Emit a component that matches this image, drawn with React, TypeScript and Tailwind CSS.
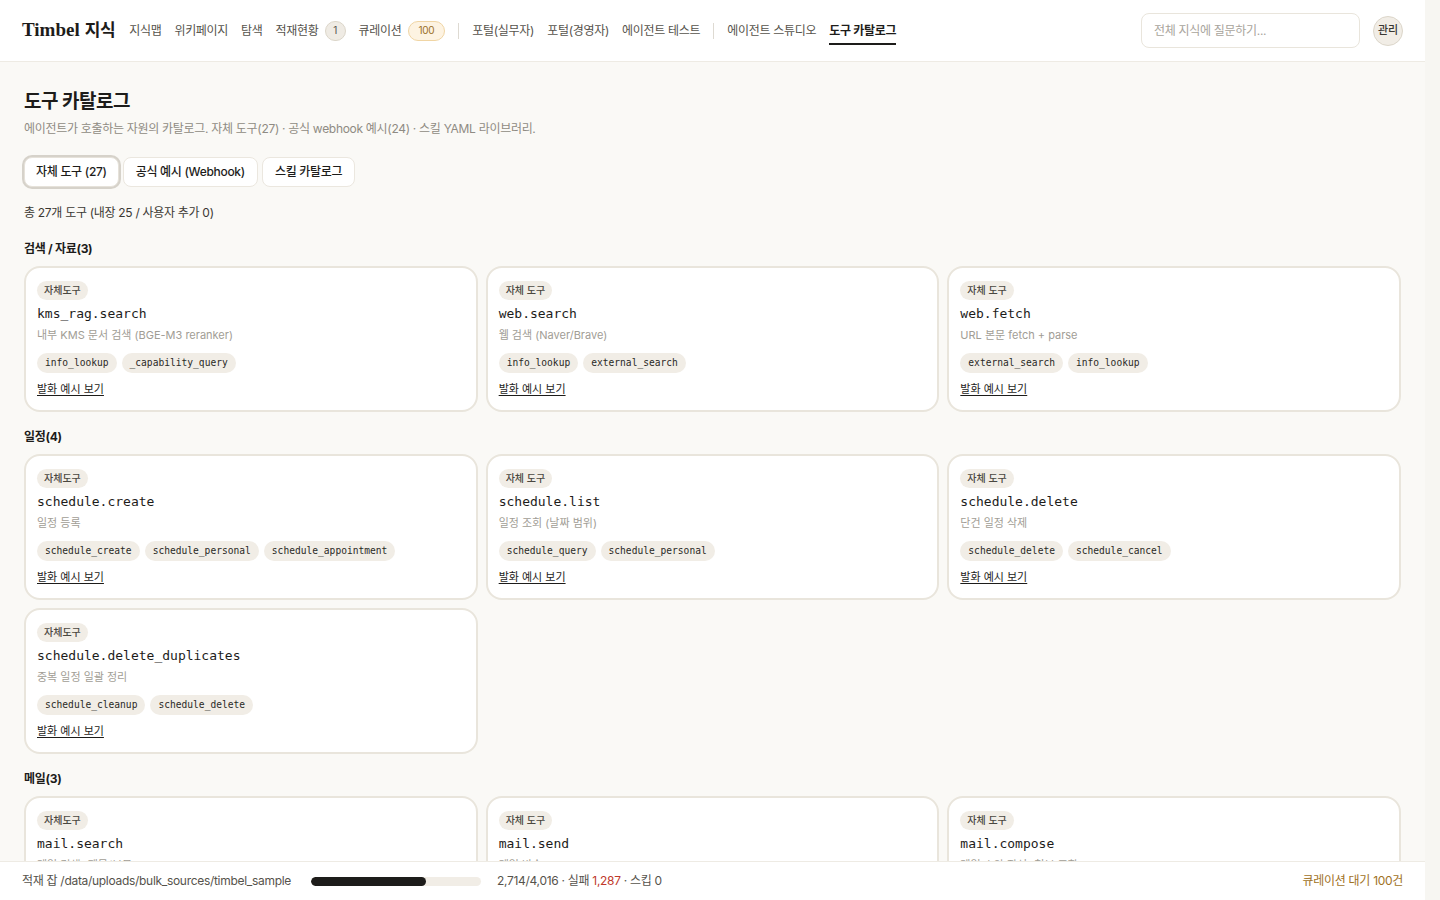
import React from 'react'

type Tool = {
  name: string
  desc: string
  tags: string[]
}

type Section = {
  title: string
  tools: Tool[]
}

const sections: Section[] = [
  {
    title: '검색 / 자료(3)',
    tools: [
      { name: 'kms_rag.search', desc: '내부 KMS 문서 검색 (BGE-M3 reranker)', tags: ['info_lookup', '_capability_query'] },
      { name: 'web.search', desc: '웹 검색 (Naver/Brave)', tags: ['info_lookup', 'external_search'] },
      { name: 'web.fetch', desc: 'URL 본문 fetch + parse', tags: ['external_search', 'info_lookup'] },
    ],
  },
  {
    title: '일정(4)',
    tools: [
      { name: 'schedule.create', desc: '일정 등록', tags: ['schedule_create', 'schedule_personal', 'schedule_appointment'] },
      { name: 'schedule.list', desc: '일정 조회 (날짜 범위)', tags: ['schedule_query', 'schedule_personal'] },
      { name: 'schedule.delete', desc: '단건 일정 삭제', tags: ['schedule_delete', 'schedule_cancel'] },
      { name: 'schedule.delete_duplicates', desc: '중복 일정 일괄 정리', tags: ['schedule_cleanup', 'schedule_delete'] },
    ],
  },
  {
    title: '메일(3)',
    tools: [
      { name: 'mail.search', desc: '메일 검색 (제목/본문)', tags: ['mail_query', 'info_lookup'] },
      { name: 'mail.send', desc: '메일 발송', tags: ['mail_send'] },
      { name: 'mail.compose', desc: '메일 초안 작성 (첨부 포함)', tags: ['mail_compose', 'mail_send'] },
    ],
  },
  {
    title: '문서(3)',
    tools: [
      { name: 'doc.summarize', desc: '문서 요약', tags: ['doc_summary'] },
      { name: 'doc.translate', desc: '문서 번역', tags: ['doc_translate'] },
      { name: 'doc.compare', desc: '문서 비교', tags: ['doc_compare'] },
    ],
  },
]

const navItems = ['지식맵', '위키페이지', '탐색']

const sans = "font-['Inter','Noto_Sans_CJK_KR',sans-serif]"
const mono = "font-['DejaVu_Sans_Mono',monospace]"

function ToolCard({ tool, col }: { tool: Tool; col: number }) {
  return (
    <div className="rounded-2xl border-2 border-[#e9e5dc] bg-white px-[11px] pt-[13px] pb-[12px]">
      <div className="flex">
        <span className="inline-flex h-[19px] items-center rounded-full bg-[#f1ede6] px-[7px] text-[10px] font-medium text-[#4a4740]">
          {col === 0 ? '자체도구' : '자체 도구'}
        </span>
      </div>
      <div className={`${mono} mt-[3px] text-[13px] leading-[22px] text-[#1d1c1a]`}>{tool.name}</div>
      <div className="text-[11px] leading-[20px] text-[#a19d95]">{tool.desc}</div>
      <div className="mt-[8px] flex flex-wrap gap-[5px]">
        {tool.tags.map((t) => (
          <span
            key={t}
            className={`${mono} inline-flex h-[20px] items-center rounded-full bg-[#f1ede6] px-[8px] text-[9.6px] text-[#2a2925]`}
          >
            {t}
          </span>
        ))}
      </div>
      <a className="mt-[7px] block w-fit text-[11px] leading-[18px] text-[#1d1c1a] underline underline-offset-2">
        발화 예시 보기
      </a>
    </div>
  )
}

export default function App() {
  return (
    <div className={`${sans} flex h-screen overflow-hidden bg-[#faf9f6] text-[#1d1c1a]`}>
      <div className="flex min-w-0 flex-1 flex-col">
        {/* top navigation */}
        <header className="flex h-[62px] shrink-0 items-center border-b border-[#eeebe4] bg-white px-[22px]">
          <div className="flex items-center font-bold">
            <span className="font-['Liberation_Serif',serif] text-[19px]">Timbel</span>
            <span className="ml-[5px] text-[17px] tracking-tight">지식</span>
          </div>
          <nav className="ml-[14px] flex items-center gap-[13px] text-[12px] tracking-tight text-[#56534c]">
            {navItems.map((n) => (
              <span key={n}>{n}</span>
            ))}
            <span className="flex items-center gap-[6px]">
              적재현황
              <span className="inline-flex h-[20px] w-[21px] items-center justify-center rounded-full border border-[#dcd6ca] bg-[#efebe4] text-[10px] text-[#56534c]">
                1
              </span>
            </span>
            <span className="flex items-center gap-[6px]">
              큐레이션
              <span className="inline-flex h-[20px] items-center justify-center rounded-full border border-[#f0d5a4] bg-[#fdf3e2] px-[10px] text-[10px] text-[#9a6f28]">
                100
              </span>
            </span>
            <span className="h-[16px] w-px bg-[#dedad2]" />
            <span>포털(실무자)</span>
            <span>포털(경영자)</span>
            <span>에이전트 테스트</span>
            <span className="h-[16px] w-px bg-[#dedad2]" />
            <span>에이전트 스튜디오</span>
            <span className="relative font-bold text-[#1d1c1a]">
              도구 카탈로그
              <span className="absolute left-0 right-0 top-[21px] h-[2px] bg-[#1d1c1a]" />
            </span>
          </nav>
          <div className="ml-auto flex items-center gap-[13px]">
            <input
              placeholder="전체 지식에 질문하기..."
              className="h-[35px] w-[219px] rounded-lg border border-[#e9e5dc] bg-white px-[12px] text-[12px] tracking-tight outline-none placeholder:text-[#a8a49c]"
            />
            <button className="flex h-[30px] w-[30px] items-center justify-center rounded-full border border-[#dcd6ca] bg-[#f1ede6] text-[11px] font-medium text-[#3a3833]">
              관리
            </button>
          </div>
        </header>

        <main className="min-h-0 flex-1 overflow-y-auto px-[24px] pt-[27px] pb-[40px] [scrollbar-width:none]">
          <h1 className="text-[19px] font-bold leading-[26px] tracking-tight">도구 카탈로그</h1>
          <p className="mt-[5px] text-[12px] tracking-tight text-[#8f8b83]">
            에이전트가 호출하는 자원의 카탈로그. 자체 도구(27) · 공식 webhook 예시(24) · 스킬 YAML 라이브러리.
          </p>

          <div className="mt-[19px] flex gap-[4px] text-[12px] tracking-tight">
            <button className="h-[30px] rounded-lg border border-[#e6e2da] bg-white px-[11px] font-medium shadow-[0_0_0_2px_#d6d2ca]">
              자체 도구 (27)
            </button>
            <button className="h-[30px] rounded-lg border border-[#ebe7df] bg-white px-[12px] font-medium">
              공식 예시 (Webhook)
            </button>
            <button className="h-[30px] rounded-lg border border-[#ebe7df] bg-white px-[12px] font-medium">
              스킬 카탈로그
            </button>
          </div>

          <p className="mt-[17px] text-[12px] tracking-tight text-[#3a3833]">총 27개 도구 (내장 25 / 사용자 추가 0)</p>

          {sections.map((s, si) => (
            <section key={s.title} className={si === 0 ? 'mt-[18px]' : 'mt-[16px]'}>
              <h2 className="text-[12px] font-bold leading-[18px] tracking-tight">{s.title}</h2>
              <div className="mt-[8px] grid grid-cols-3 gap-[8px]">
                {s.tools.map((t, i) => (
                  <ToolCard key={t.name} tool={t} col={i % 3} />
                ))}
              </div>
            </section>
          ))}
        </main>

        {/* ingest status bar */}
        <footer className="flex h-[39px] shrink-0 items-center border-t border-[#eeebe4] bg-white px-[22px] text-[12px] tracking-tight text-[#56534c]">
          <span>적재 잡 /data/uploads/bulk_sources/timbel_sample</span>
          <div className="ml-[20px] h-[9px] w-[170px] overflow-hidden rounded-full bg-[#f1ede6]">
            <div className="h-full rounded-full bg-[#1d1c1a]" style={{ width: `${(2714 / 4016) * 100}%` }} />
          </div>
          <span className="ml-[16px]">
            2,714/4,016 · 실패 <span className="text-[#c0392b]">1,287</span> · 스킵 0
          </span>
          <span className="ml-auto text-[#a0721f]">큐레이션 대기 100건</span>
        </footer>
      </div>
      {/* scroll track */}
      <div className="w-[15px] shrink-0 bg-[#f7f6f2]" />
    </div>
  )
}
